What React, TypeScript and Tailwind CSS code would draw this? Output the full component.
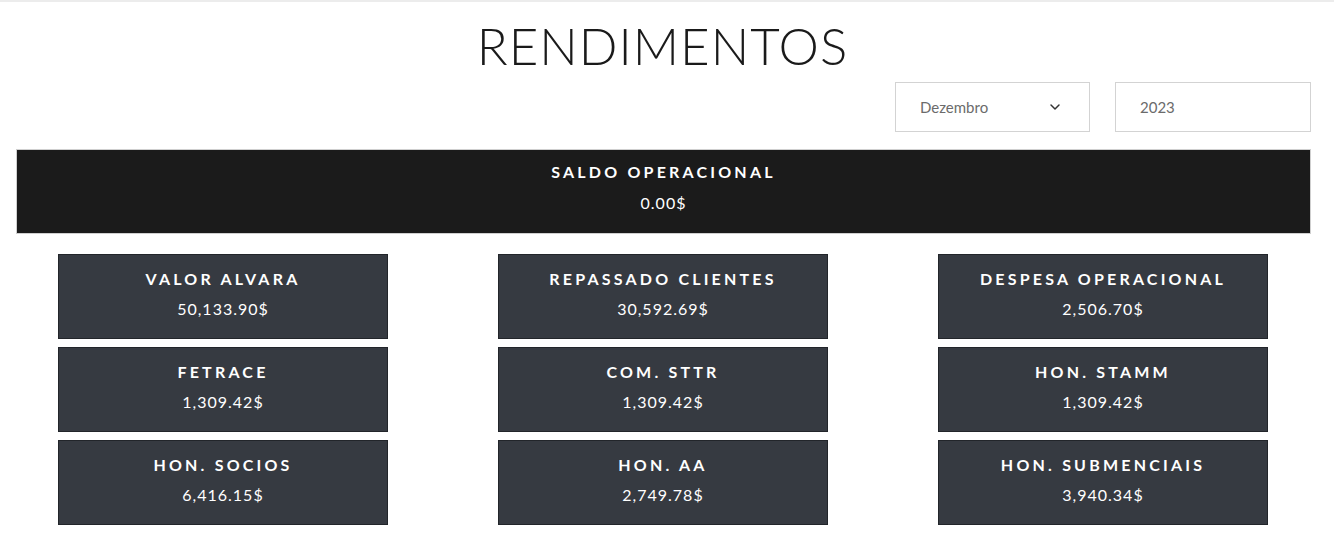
import React from "react";
import { ChevronDown } from "lucide-react";

const cards = [
  { label: "VALOR ALVARA", value: "50,133.90$" },
  { label: "REPASSADO CLIENTES", value: "30,592.69$" },
  { label: "DESPESA OPERACIONAL", value: "2,506.70$" },
  { label: "FETRACE", value: "1,309.42$" },
  { label: "COM. STTR", value: "1,309.42$" },
  { label: "HON. STAMM", value: "1,309.42$" },
  { label: "HON. SOCIOS", value: "6,416.15$" },
  { label: "HON. AA", value: "2,749.78$" },
  { label: "HON. SUBMENCIAIS", value: "3,940.34$" },
];

export default function App() {
  return (
    <div className="min-h-[558px] bg-white border-t-2 border-[#ececec] font-['Lato','Open_Sans',sans-serif] text-[#1b1b1b]">
      {/* Title */}
      <h1 className="pt-[13px] pr-[9px] h-[80px] text-center text-[51px] leading-[62px] font-light tracking-[1px] text-[#1a1a1a]">
        RENDIMENTOS
      </h1>

      {/* Filters */}
      <div className="flex justify-end gap-[25px] pr-[23px]">
        <div className="w-[195px] h-[50px] border border-[#d3d3d3] flex items-center justify-between pl-[24px] pr-[26px] text-[15px] text-[#6b6b6b]">
          <span>Dezembro</span>
          <ChevronDown className="w-4 h-4 text-[#333]" strokeWidth={2.2} />
        </div>
        <div className="w-[196px] h-[50px] border border-[#d3d3d3] flex items-center pl-[24px] text-[15px] text-[#6b6b6b]">
          2023
        </div>
      </div>

      {/* Saldo */}
      <div className="mt-[17px] ml-[16px] w-[1295px] h-[85px] bg-[#1b1b1b] border border-[#cfcfcf] flex flex-col items-center pt-[11px] text-white">
        <div className="text-[16px] font-bold tracking-[3.2px] leading-[22px]">SALDO OPERACIONAL</div>
        <div className="mt-[9px] text-[16px] leading-[22px] tracking-[1px]">0.00$</div>
      </div>

      {/* Cards */}
      <div className="mt-[20px] ml-[16px] w-[1294px] flex justify-center">
        <div className="grid grid-cols-[330px_330px_330px] gap-x-[110px] gap-y-[8px]">
          {cards.map((c) => (
            <div
              key={c.label}
              className="h-[85px] bg-[#363a41] border border-[#22252a] flex flex-col items-center pt-[13px] text-white"
            >
              <div className="text-[16px] font-bold tracking-[3.2px] leading-[22px]">{c.label}</div>
              <div className="mt-[8px] text-[16px] leading-[22px] tracking-[1px]">{c.value}</div>
            </div>
          ))}
        </div>
      </div>
    </div>
  );
}
